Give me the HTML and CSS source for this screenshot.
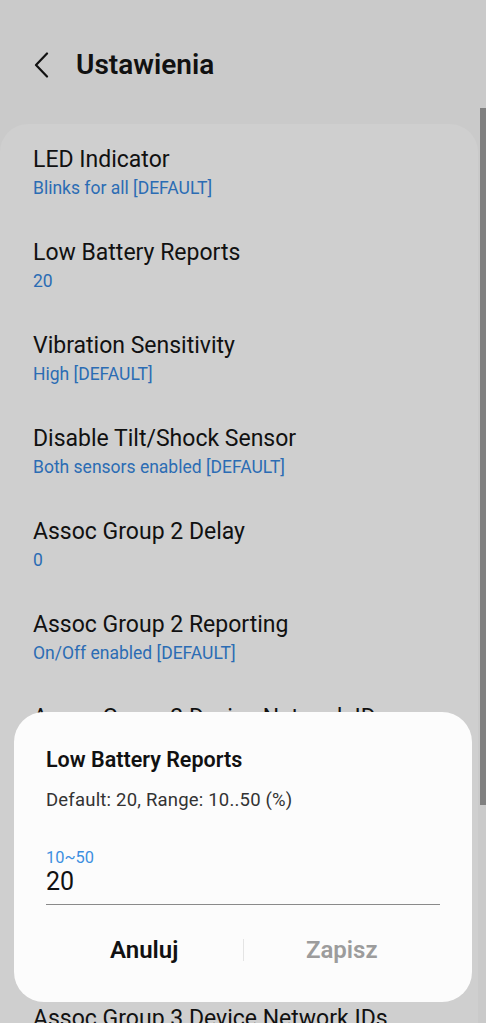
FILE: index.html
```html
<!DOCTYPE html>
<html lang="pl">
<head>
    <meta charset="UTF-8">
    <meta name="viewport" content="width=device-width, initial-scale=1.0">
    <title>Ustawienia</title>
    <link rel="stylesheet" href="styles.css">
</head>
<body>
    <header class="top-bar">
        <button class="back-btn" aria-label="Wstecz">
            <svg width="16" height="26" viewBox="0 0 16 26">
                <path d="M14 1.5 L3 13 L14 24.5" fill="none" stroke="#111" stroke-width="2.2" stroke-linecap="round" stroke-linejoin="round"/>
            </svg>
        </button>
        <h1 class="page-title">Ustawienia</h1>
    </header>

    <main class="settings-card">
        <div class="setting">
            <div class="setting-name">LED Indicator</div>
            <div class="setting-value">Blinks for all [DEFAULT]</div>
        </div>
        <div class="setting">
            <div class="setting-name">Low Battery Reports</div>
            <div class="setting-value">20</div>
        </div>
        <div class="setting">
            <div class="setting-name">Vibration Sensitivity</div>
            <div class="setting-value">High [DEFAULT]</div>
        </div>
        <div class="setting">
            <div class="setting-name">Disable Tilt/Shock Sensor</div>
            <div class="setting-value">Both sensors enabled [DEFAULT]</div>
        </div>
        <div class="setting">
            <div class="setting-name">Assoc Group 2 Delay</div>
            <div class="setting-value">0</div>
        </div>
        <div class="setting">
            <div class="setting-name">Assoc Group 2 Reporting</div>
            <div class="setting-value">On/Off enabled [DEFAULT]</div>
        </div>
        <div class="setting">
            <div class="setting-name">Assoc Group 2 Device Network IDs</div>
            <div class="setting-value">Not set<br>[DEFAULT]</div>
        </div>
        <div class="setting">
            <div class="setting-name">Assoc Group 3 Delay</div>
            <div class="setting-value">0</div>
        </div>
        <div class="setting">
            <div class="setting-name">Assoc Group 3 Reporting</div>
            <div class="setting-value">On/Off enabled [DEFAULT]</div>
        </div>
        <div class="setting">
            <div class="setting-name">Assoc Group 3 Device Network IDs</div>
        </div>
    </main>

    <div class="scrollbar"></div>

    <div class="dialog">
        <h2 class="dialog-title">Low Battery Reports</h2>
        <p class="dialog-text">Default: 20, Range: 10..50 (%)</p>
        <label class="field">
            <span class="field-hint">10~50</span>
            <span class="field-input">20</span>
        </label>
        <div class="dialog-actions">
            <button class="action">Anuluj</button>
            <span class="action-divider"></span>
            <button class="action disabled">Zapisz</button>
        </div>
    </div>
</body>
</html>
```

FILE: styles.css
```css
body {
    margin: 0;
    background-color: #cacaca;
    font-family: Roboto, "Noto Sans", sans-serif;
    height: 1023px;
    overflow: hidden;
}

.top-bar {
    display: flex;
    align-items: center;
    height: 124px;
    box-sizing: border-box;
    padding: 0 0 0 33px;
}

.back-btn {
    background: none;
    border: none;
    padding: 0;
    width: 43px;
    height: 26px;
    display: flex;
    align-items: center;
    margin-top: 5px;
}

.page-title {
    margin: 4px 0 0 0;
    font-size: 28px;
    font-weight: 600;
    color: #111;
}

.settings-card {
    background-color: #cfcfcf;
    border-radius: 28px 28px 0 0;
    width: 478px;
    height: 899px;
    overflow: hidden;
}

.setting {
    padding: 22px 0 18px 33px;
}

.setting-name {
    font-size: 23px;
    line-height: 28px;
    color: #111;
}

.setting-value {
    font-size: 17.5px;
    line-height: 22px;
    margin-top: 3px;
    color: #2b6cb4;
}

.scrollbar {
    position: absolute;
    left: 480px;
    top: 108px;
    width: 6px;
    height: 697px;
    background-color: #808080;
}

.dialog {
    position: absolute;
    left: 14px;
    top: 712px;
    width: 458px;
    height: 290px;
    box-sizing: border-box;
    padding: 34px 32px 0 32px;
    background-color: #fcfcfc;
    border-radius: 30px;
}

.dialog-title {
    margin: 0;
    font-size: 21.5px;
    line-height: 28px;
    font-weight: 600;
    color: #111;
}

.dialog-text {
    margin: 14px 0 0 0;
    font-size: 18.5px;
    line-height: 24px;
    letter-spacing: 0.2px;
    color: #333;
}

.field {
    display: flex;
    flex-direction: column;
    margin-top: 37px;
    border-bottom: 1.5px solid #8a8a8a;
    width: 394px;
}

.field-hint {
    font-size: 16.4px;
    line-height: 18px;
    color: #3c8fe0;
}

.field-input {
    font-size: 25px;
    line-height: 30px;
    color: #111;
    padding-bottom: 7px;
}

.dialog-actions {
    display: flex;
    align-items: center;
    margin-top: 28px;
    width: 394px;
}

.action {
    flex: 1;
    background: none;
    border: none;
    padding: 0;
    font-family: inherit;
    font-size: 24px;
    font-weight: 600;
    color: #111;
    line-height: 34px;
}

.action.disabled {
    color: #9c9c9c;
}

.action-divider {
    width: 1px;
    height: 22px;
    background-color: #e4e4e4;
}
```
